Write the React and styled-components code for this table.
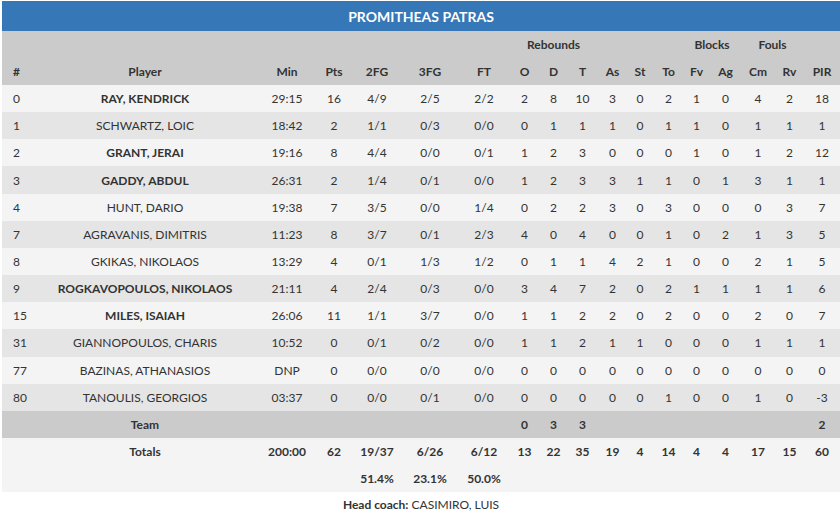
import React from "react";
import styled, { createGlobalStyle } from "styled-components";

const GlobalStyle = createGlobalStyle`
  body {
    margin: 0;
    background: #ffffff;
    font-family: Lato, "Open Sans", sans-serif;
    color: #333;
  }
`;

const Wrapper = styled.div`
  padding: 1px 0 0 2px;
  width: 838px;
`;

const Table = styled.table`
  width: 838px;
  table-layout: fixed;
  border-collapse: collapse;
  font-size: 12px;
`;

const Col = styled.col`
  width: ${(p) => p.$w}px;
`;

const TitleCell = styled.th`
  background: #3577b7;
  color: #ffffff;
  height: 30px;
  padding: 0;
  font-size: 14px;
  font-weight: 700;
  text-align: center;
`;

const HeadRow = styled.tr`
  background: #cbcbcb;
  height: 27px;
`;

const HeadCell = styled.th`
  padding: 0;
  font-weight: 700;
  color: #333;
  text-align: ${(p) => (p.$left ? "left" : "center")};
  padding-left: ${(p) => (p.$left ? "11px" : "0")};
`;

const Row = styled.tr`
  height: ${(p) => (p.$player ? "27.17px" : "27px")};
  background: ${(p) => p.$bg};
`;

const Cell = styled.td`
  padding: 0;
  white-space: nowrap;
  text-align: ${(p) => (p.$left ? "left" : "center")};
  padding-left: ${(p) => (p.$left ? "11px" : "0")};
  font-weight: ${(p) => (p.$bold ? 700 : 400)};
  color: #333;
`;

const Coach = styled.div`
  padding: 5px 0;
  line-height: 16px;
  font-size: 12px;
  text-align: center;
  color: #333;
`;

const CoachLabel = styled.span`
  font-weight: 700;
`;

const widths = [28, 230, 54, 40, 46, 60, 48, 33, 25, 33, 27, 28, 29, 27, 31, 34, 29, 36];

const headers = ["Min", "Pts", "2FG", "3FG", "FT", "O", "D", "T", "As", "St", "To", "Fv", "Ag", "Cm", "Rv", "PIR"];

const players = [
  ["0", "RAY, KENDRICK", true, "29:15", "16", "4/9", "2/5", "2/2", "2", "8", "10", "3", "0", "2", "1", "0", "4", "2", "18"],
  ["1", "SCHWARTZ, LOIC", false, "18:42", "2", "1/1", "0/3", "0/0", "0", "1", "1", "1", "0", "1", "1", "0", "1", "1", "1"],
  ["2", "GRANT, JERAI", true, "19:16", "8", "4/4", "0/0", "0/1", "1", "2", "3", "0", "0", "0", "1", "0", "1", "2", "12"],
  ["3", "GADDY, ABDUL", true, "26:31", "2", "1/4", "0/1", "0/0", "1", "2", "3", "3", "1", "1", "0", "1", "3", "1", "1"],
  ["4", "HUNT, DARIO", false, "19:38", "7", "3/5", "0/0", "1/4", "0", "2", "2", "3", "0", "3", "0", "0", "0", "3", "7"],
  ["7", "AGRAVANIS, DIMITRIS", false, "11:23", "8", "3/7", "0/1", "2/3", "4", "0", "4", "0", "0", "1", "0", "2", "1", "3", "5"],
  ["8", "GKIKAS, NIKOLAOS", false, "13:29", "4", "0/1", "1/3", "1/2", "0", "1", "1", "4", "2", "1", "0", "0", "2", "1", "5"],
  ["9", "ROGKAVOPOULOS, NIKOLAOS", true, "21:11", "4", "2/4", "0/3", "0/0", "3", "4", "7", "2", "0", "2", "1", "1", "1", "1", "6"],
  ["15", "MILES, ISAIAH", true, "26:06", "11", "1/1", "3/7", "0/0", "1", "1", "2", "2", "0", "2", "0", "0", "2", "0", "7"],
  ["31", "GIANNOPOULOS, CHARIS", false, "10:52", "0", "0/1", "0/2", "0/0", "1", "1", "2", "1", "1", "0", "0", "0", "1", "1", "1"],
  ["77", "BAZINAS, ATHANASIOS", false, "DNP", "0", "0/0", "0/0", "0/0", "0", "0", "0", "0", "0", "0", "0", "0", "0", "0", "0"],
  ["80", "TANOULIS, GEORGIOS", false, "03:37", "0", "0/0", "0/1", "0/0", "0", "0", "0", "0", "0", "1", "0", "0", "1", "0", "-3"],
];

const team = ["", "", "", "", "", "0", "3", "3", "", "", "", "", "", "", "", "2"];
const totals = ["200:00", "62", "19/37", "6/26", "6/12", "13", "22", "35", "19", "4", "14", "4", "4", "17", "15", "60"];
const percents = ["", "", "51.4%", "23.1%", "50.0%", "", "", "", "", "", "", "", "", "", "", ""];

export default function App() {
  return (
    <Wrapper>
      <GlobalStyle />
      <Table>
        <colgroup>
          {widths.map((w, i) => (
            <Col key={i} $w={w} />
          ))}
        </colgroup>
        <thead>
          <tr>
            <TitleCell colSpan={18}>PROMITHEAS PATRAS</TitleCell>
          </tr>
          <HeadRow>
            <HeadCell colSpan={7} />
            <HeadCell colSpan={3}>Rebounds</HeadCell>
            <HeadCell colSpan={3} />
            <HeadCell colSpan={2}>Blocks</HeadCell>
            <HeadCell colSpan={2}>Fouls</HeadCell>
            <HeadCell />
          </HeadRow>
          <HeadRow>
            <HeadCell $left>#</HeadCell>
            <HeadCell>Player</HeadCell>
            {headers.map((h) => (
              <HeadCell key={h}>{h}</HeadCell>
            ))}
          </HeadRow>
        </thead>
        <tbody>
          {players.map((p, i) => (
            <Row key={p[0]} $player $bg={i % 2 === 0 ? "#f4f4f4" : "#e5e5e5"}>
              <Cell $left>{p[0]}</Cell>
              <Cell $bold={p[2]}>{p[1]}</Cell>
              {p.slice(3).map((v, j) => (
                <Cell key={j}>{v}</Cell>
              ))}
            </Row>
          ))}
          <Row $bg="#cbcbcb">
            <Cell />
            <Cell $bold>Team</Cell>
            {team.map((v, j) => (
              <Cell key={j} $bold>{v}</Cell>
            ))}
          </Row>
          <Row $bg="#f4f4f4">
            <Cell />
            <Cell $bold>Totals</Cell>
            {totals.map((v, j) => (
              <Cell key={j} $bold>{v}</Cell>
            ))}
          </Row>
          <Row $bg="#f4f4f4">
            <Cell />
            <Cell />
            {percents.map((v, j) => (
              <Cell key={j} $bold>{v}</Cell>
            ))}
          </Row>
        </tbody>
      </Table>
      <Coach>
        <CoachLabel>Head coach:</CoachLabel> CASIMIRO, LUIS
      </Coach>
    </Wrapper>
  );
}
